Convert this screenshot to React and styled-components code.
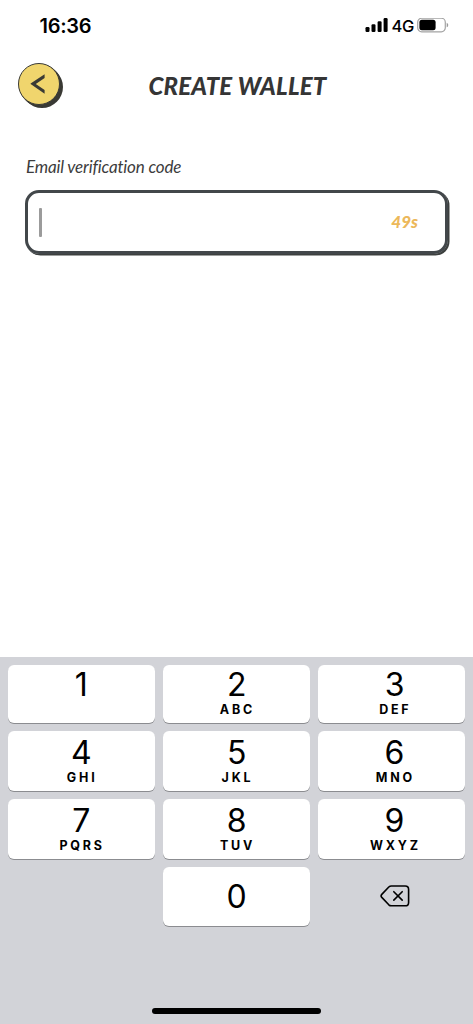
import React from 'react';
import styled, { createGlobalStyle } from 'styled-components';

const keys = [
     { digit: '1' },
     { digit: '2', letters: 'ABC' },
     { digit: '3', letters: 'DEF', shift: 2.5 },
     { digit: '4', letters: 'GHI', drop: 1.5 },
     { digit: '5', letters: 'JKL', drop: 1.5 },
     { digit: '6', letters: 'MNO', drop: 1.5, shift: 2.5 },
     { digit: '7', letters: 'PQRS', drop: 1.5 },
     { digit: '8', letters: 'TUV', drop: 1.5 },
     { digit: '9', letters: 'WXYZ', drop: 1.5, shift: 2.5 },
];

const StatusBar = () => (
     <Status>
          <Time>16:36</Time>
          <Indicators>
               <svg width="23" height="15" viewBox="0 0 23 15">
                    <rect x="0.5" y="9" width="4" height="5" rx="1.2" />
                    <rect x="6.5" y="6.3" width="4" height="7.7" rx="1.2" />
                    <rect x="12.6" y="3.3" width="4" height="10.7" rx="1.2" />
                    <rect x="18.6" y="0.1" width="4" height="13.9" rx="1.2" />
               </svg>
               <Network>4G</Network>
               <svg width="32" height="15" viewBox="0 0 32 15">
                    <rect x="0.7" y="0.2" width="27.6" height="13.6" rx="4" fill="none" stroke="#a3a3a3" strokeWidth="1.2" />
                    <rect x="2.4" y="1.8" width="16.2" height="10.4" rx="2.5" />
                    <path d="M29.7 4.7c2 .8 2 3.8 0 4.6z" fill="#999" />
               </svg>
          </Indicators>
     </Status>
);

const Keypad = () => (
     <Pad>
          <Keys>
               {keys.map(({ digit, letters, drop, shift }) => (
                    <Key key={digit} $drop={drop} $shift={shift}>
                         <Digit>{digit}</Digit>
                         {letters && <Letters>{letters}</Letters>}
                    </Key>
               ))}
               <Blank />
               <Key $centered>
                    <Digit>0</Digit>
               </Key>
               <DeleteKey aria-label="Delete">
                    <svg width="30" height="22" viewBox="0 0 30 22" fill="none" stroke="#000" strokeWidth="1.6" strokeLinecap="round" strokeLinejoin="round">
                         <path d="M11.4 1H25.2Q28.6 1 28.6 4.4V17.4Q28.6 20.8 25.2 20.8H11.4Q9.9 20.8 8.8 19.8L1.8 12.4Q.4 10.9 1.8 9.4L8.8 2Q9.9 1 11.4 1Z" />
                         <path d="M13.8 6.7l8.4 8.4M22.2 6.7l-8.4 8.4" />
                    </svg>
               </DeleteKey>
          </Keys>
          <HomeBar />
     </Pad>
);

const App = () => (
     <Screen>
          <GlobalStyle />
          <StatusBar />
          <Header>
               <BackButton aria-label="Back">
                    <svg width="16" height="22" viewBox="0 0 16 22" fill="#3a3a35">
                         <path d="M14.6 1.2V5L5.8 10.9L14.6 17V20.8L.6 11V10.6Z" />
                    </svg>
               </BackButton>
               <Title>CREATE WALLET</Title>
          </Header>
          <Form>
               <Label>Email verification code</Label>
               <CodeField>
                    <Caret />
                    <Countdown>49s</Countdown>
               </CodeField>
          </Form>
          <Keypad />
     </Screen>
);

export default App;

const GlobalStyle = createGlobalStyle`
     * {
          box-sizing: border-box;
     }
     body {
          margin: 0;
          background: #fff;
     }
     button {
          border: 0;
          padding: 0;
          font: inherit;
          color: inherit;
     }
`;

const Screen = styled.div`
     width: 473px;
     height: 1024px;
     display: flex;
     flex-direction: column;
     overflow: hidden;
     background: #fff;
     color: #000;
     font-family: Inter, sans-serif;
`;

const Status = styled.div`
     height: 52px;
     flex: none;
     display: flex;
     justify-content: space-between;
     align-items: center;
     padding: 0 24px 0 39.5px;
`;

const Time = styled.div`
     font-size: 20px;
     font-weight: 600;
     line-height: 24px;
     letter-spacing: -0.3px;
`;

const Indicators = styled.div`
     display: flex;
     align-items: center;
     padding-bottom: 1px;
`;

const Network = styled.span`
     margin: 0 3px 0 3px;
     font-size: 16.5px;
     font-weight: 500;
     line-height: 20px;
     letter-spacing: -0.3px;
`;

const Header = styled.header`
     height: 68px;
     flex: none;
     display: flex;
     align-items: flex-start;
     padding: 11px 18px 0;
`;

const BackButton = styled.button`
     width: 42px;
     height: 42px;
     flex: none;
     display: flex;
     align-items: center;
     justify-content: center;
     padding-right: 3px;
     border: 1.5px solid #3a3a35;
     border-radius: 50%;
     background: #f0d56d;
     box-shadow: 1px 1px 0 #3a3a35, 2px 2px 0 #3a3a35, 3px 3px 0 #3a3a35;
`;

const Title = styled.h1`
     flex: 1;
     margin: 7px 40px 0 0;
     text-align: center;
     font-family: Lato, sans-serif;
     font-size: 24px;
     font-style: italic;
     font-weight: 900;
     line-height: 32px;
     letter-spacing: 0.2px;
     color: #353535;
`;

const Form = styled.div`
     flex: 1;
     padding: 35px 25px 0;
`;

const Label = styled.div`
     padding-left: 1px;
     font-family: Lato, sans-serif;
     font-size: 17px;
     font-style: italic;
     font-variant-ligatures: none;
     line-height: 24px;
     letter-spacing: -0.16px;
     color: #3c3c3c;
`;

const CodeField = styled.div`
     height: 64px;
     display: flex;
     align-items: center;
     justify-content: space-between;
     margin-top: 11px;
     padding: 0 27px 0 11px;
     border: 3px solid #42474a;
     border-radius: 14px;
     box-shadow: 1px 1px 0 #3d403f, 1.5px 1.5px 0 #3d403f;
`;

const Caret = styled.span`
     width: 3px;
     height: 29px;
     border-radius: 1px;
     background: #9b9b9b;
`;

const Countdown = styled.span`
     font-family: Lato, sans-serif;
     font-size: 17px;
     font-style: italic;
     font-weight: 900;
     line-height: 22px;
     color: #ecb85a;
`;

const Pad = styled.div`
     height: 367px;
     flex: none;
     display: flex;
     flex-direction: column;
     justify-content: space-between;
     padding: 7.5px 7.5px 10px;
     background: #d2d3d8;
`;

const Keys = styled.div`
     display: grid;
     grid-template-columns: repeat(3, 1fr);
     grid-template-rows: 58px 59.5px 59.5px 58.5px;
     gap: 8.6px 8px;
`;

const Key = styled.button`
     display: flex;
     flex-direction: column;
     align-items: center;
     justify-content: ${(props) => (props.$centered ? 'center' : 'flex-start')};
     padding-top: ${(props) => (props.$centered ? 0 : 1 + (props.$drop || 0))}px;
     padding-left: ${(props) => (props.$shift || 0) * 2}px;
     border-radius: 6px;
     background: #fff;
     box-shadow: 0 1px 0 #8b8c90;
`;

const Digit = styled.span`
     font-size: 32px;
     font-weight: 400;
     line-height: 38px;
     letter-spacing: -0.4px;
`;

const Letters = styled.span`
     padding-left: 2px;
     font-size: 12.5px;
     font-weight: 700;
     line-height: 12px;
     letter-spacing: 2.8px;
`;

const Blank = styled.div``;

const DeleteKey = styled.button`
     display: flex;
     align-items: center;
     justify-content: center;
     padding: 0 0 2px 6px;
     background: transparent;
`;

const HomeBar = styled.div`
     width: 169px;
     height: 6px;
     align-self: center;
     border-radius: 3px;
     background: #000;
`;
